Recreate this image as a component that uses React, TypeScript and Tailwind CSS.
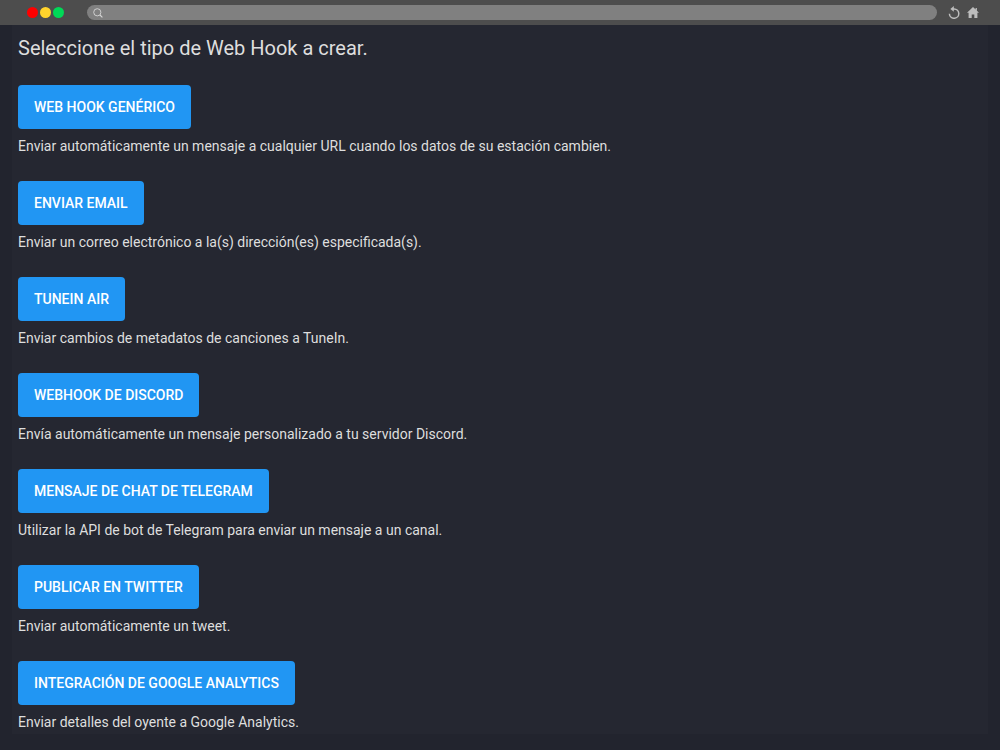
const hooks = [
  {
    name: "Web Hook genérico",
    description: "Enviar automáticamente un mensaje a cualquier URL cuando los datos de su estación cambien.",
  },
  {
    name: "Enviar email",
    description: "Enviar un correo electrónico a la(s) dirección(es) especificada(s).",
  },
  {
    name: "TuneIn AIR",
    description: "Enviar cambios de metadatos de canciones a TuneIn.",
  },
  {
    name: "Webhook de Discord",
    description: "Envía automáticamente un mensaje personalizado a tu servidor Discord.",
  },
  {
    name: "Mensaje de chat de Telegram",
    description: "Utilizar la API de bot de Telegram para enviar un mensaje a un canal.",
  },
  {
    name: "Publicar en Twitter",
    description: "Enviar automáticamente un tweet.",
  },
  {
    name: "Integración de Google Analytics",
    description: "Enviar detalles del oyente a Google Analytics.",
  },
];

function BrowserBar() {
  return (
    <header className="flex h-[25px] items-center bg-[#4d4d4d] pr-[21px] pl-[27px]">
      {/* Window dots */}
      <div className="flex gap-[2px]">
        <span className="size-[11px] rounded-full bg-[#ff0000]" />
        <span className="size-[11px] rounded-full bg-[#ffd32c]" />
        <span className="size-[11px] rounded-full bg-[#00d957]" />
      </div>

      {/* Address field */}
      <div className="ml-[23px] flex h-[15px] flex-1 items-center rounded-full bg-[#808080] pl-[6px]">
        <svg viewBox="0 0 10 10" className="size-[10px]" fill="none" stroke="#d6d6d6">
          <circle cx="4.3" cy="4.3" r="3.6" strokeWidth="0.9" />
          <path d="M7 7l2.4 2.4" strokeWidth="1.1" />
        </svg>
        <input
          type="text"
          aria-label="Dirección"
          className="h-full min-w-0 flex-1 bg-transparent px-2 text-[10px] text-white outline-none"
        />
      </div>

      <button type="button" aria-label="Recargar" className="ml-[11px]">
        <svg viewBox="0 0 12 13" className="h-[13px] w-[12px]" fill="none">
          <path d="M4.5 2.9h1.6a4.7 4.7 0 1 1-4.7 4.9" stroke="#bdbdbd" strokeWidth="1.5" />
          <path d="M5.8 0v5.8L2.4 2.9z" fill="#bdbdbd" />
        </svg>
      </button>
      <button type="button" aria-label="Inicio" className="ml-[7px]">
        <svg viewBox="0 0 12 11" className="h-[11px] w-[12px]" fill="#bdbdbd">
          <path d="M6 0L0 5.8h1.6V11h3.1V7.4h2.6V11h3.1V5.8H12L9.9 3.8V1H8.6v1.5z" />
        </svg>
      </button>
    </header>
  );
}

export default function App() {
  return (
    <div className="min-h-screen bg-[#22242e] font-['Roboto',sans-serif] text-[#dedede]">
      <BrowserBar />

      <main className="mx-3 bg-[#252731] px-[6px] pt-[9px] pb-[2px]">
        <h1 className="text-xl leading-7">Seleccione el tipo de Web Hook a crear.</h1>

        <ul className="mt-[23px] flex flex-col gap-[25px]">
          {hooks.map((hook, i) => (
            <li key={hook.name} className="flex flex-col items-start gap-[7px]">
              <button
                type="button"
                aria-describedby={`hook-${i}`}
                className="h-11 rounded-[4px] bg-[#2196f3] px-4
                           text-sm leading-5 font-medium uppercase text-white
                           hover:bg-[#1e88e5]"
              >
                {hook.name}
              </button>
              <p id={`hook-${i}`} className="text-sm leading-5">
                {hook.description}
              </p>
            </li>
          ))}
        </ul>
      </main>
    </div>
  );
}
